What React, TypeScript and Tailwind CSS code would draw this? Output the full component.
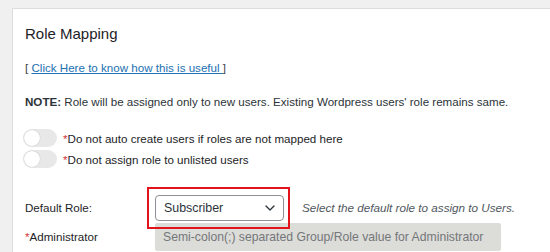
import React from "react";

function Toggle() {
  return (
    <div className="relative w-[34px] h-[18px] rounded-full bg-[#e8e8e8] shrink-0">
      <div className="absolute left-[1px] top-[1px] w-[16px] h-[16px] rounded-full bg-white shadow-[0_0_1px_rgba(0,0,0,0.3)]" />
    </div>
  );
}

export default function App() {
  return (
    <div
      className="w-[550px] h-[252px] overflow-hidden bg-[#f0f0f1] pt-[8px] pl-[12px]"
      style={{ fontFamily: '"Liberation Sans", Arial, sans-serif' }}
    >
      <div className="h-[260px] bg-white border-l border-t border-[#dcdcde] pl-[12px] pt-[16px] text-[#1d2327]">
        <div className="text-[15px] leading-[18px] text-[#1d2327]">Role Mapping</div>
        <div className="mt-[17px] text-[11.6px] leading-[16px] text-[#3c434a]">
          [ <a className="text-[#2271b1] underline">Click Here to know how this is useful </a>]
        </div>
        <div className="mt-[18px] text-[11.6px] leading-[16px] text-[#2c3338] whitespace-nowrap">
          <span className="font-bold">NOTE:</span> Role will be assigned only to new users. Existing Wordpress users' role remains same.
        </div>
        <div className="mt-[18px] flex items-center gap-[6px] -ml-[2px]">
          <Toggle />
          <div className="text-[11.6px] leading-[16px] mt-[3px]">
            <span className="text-[#d63638]">*</span>Do not auto create users if roles are not mapped here
          </div>
        </div>
        <div className="mt-[2px] flex items-center gap-[6px] -ml-[2px]">
          <Toggle />
          <div className="text-[11.6px] leading-[16px] mt-[3px]">
            <span className="text-[#d63638]">*</span>Do not assign role to unlisted users
          </div>
        </div>
        <div className="mt-[27px] flex items-center">
          <div className="w-[130px] text-[11.6px] leading-[16px]">Default Role:</div>
          <div className="relative">
            <div className="w-[129px] h-[26px] border border-[#8c8f94] rounded-[4px] flex items-center justify-between pl-[8px] pr-[8px] text-[12.4px] text-[#2c3338]">
              <span>Subscriber</span>
              <svg width="10" height="6" viewBox="0 0 10 6" fill="none">
                <path d="M1 1l4 4 4-4" stroke="#2c3338" strokeWidth="1.3" strokeLinecap="round" strokeLinejoin="round" />
              </svg>
            </div>
            <div className="absolute left-[-8px] top-[-8px] right-[-6px] bottom-[-8px] border-2 border-[#e3131b] z-10 pointer-events-none" />
          </div>
          <div className="ml-[18px] text-[11.7px] italic text-[#50575e] whitespace-nowrap">Select the default role to assign to Users.</div>
        </div>
        <div className="mt-[2px] flex items-center">
          <div className="w-[130px] text-[11.6px] leading-[16px]">
            <span className="text-[#d63638]">*</span>Administrator
          </div>
          <div className="w-[346px] h-[28px] bg-[#dcdcd8] rounded-[2px] flex items-center pl-[8px] text-[12.2px] text-[#74777a] whitespace-nowrap">
            Semi-colon(;) separated Group/Role value for Administrator
          </div>
        </div>
      </div>
    </div>
  );
}
